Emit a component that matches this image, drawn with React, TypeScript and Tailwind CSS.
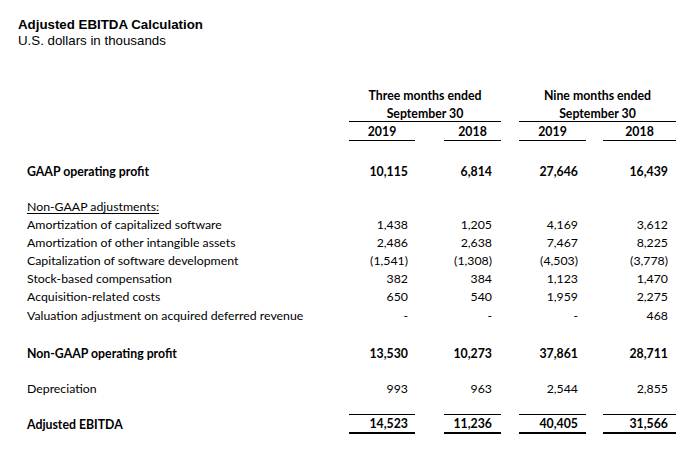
import React from 'react';

type Row = {
  label: string;
  values: [string, string, string, string];
  bold?: boolean;
  height: string;
};

const head = "font-['Liberation_Sans',Arial,sans-serif]";
const body = "font-['Lato','Open_Sans',sans-serif]";

const NumCells: React.FC<{ values: string[]; bold?: boolean }> = ({ values, bold }) => (
  <>
    <div className={`w-[66px] pr-[7px] text-right ${bold ? 'font-bold' : ''}`}>{values[0]}</div>
    <div className={`ml-[29px] w-[57px] pr-[9px] text-right ${bold ? 'font-bold' : ''}`}>{values[1]}</div>
    <div className={`ml-[18px] w-[67px] pr-[8px] text-right ${bold ? 'font-bold' : ''}`}>{values[2]}</div>
    <div className={`ml-[17px] w-[73px] pr-[8px] text-right ${bold ? 'font-bold' : ''}`}>{values[3]}</div>
  </>
);

const adjustments: Row[] = [
  { label: 'Amortization of capitalized software', values: ['1,438', '1,205', '4,169', '3,612'], height: 'h-[18px]' },
  { label: 'Amortization of other intangible assets', values: ['2,486', '2,638', '7,467', '8,225'], height: 'h-[18px]' },
  { label: 'Capitalization of software development', values: ['(1,541)', '(1,308)', '(4,503)', '(3,778)'], height: 'h-[18px]' },
  { label: 'Stock-based compensation', values: ['382', '384', '1,123', '1,470'], height: 'h-[18px]' },
  { label: 'Acquisition-related costs', values: ['650', '540', '1,959', '2,275'], height: 'h-[19px]' },
  { label: 'Valuation adjustment on acquired deferred revenue', values: ['-', '-', '-', '468'], height: 'h-[19px]' },
];

export default function App() {
  return (
    <div className="w-[700px] h-[457px] bg-white text-black overflow-hidden">
      {/* Title */}
      <div className={`${head} pl-[18px] pt-[17px] text-[13.3px] leading-[16px]`}>
        <div className="font-bold">Adjusted EBITDA Calculation</div>
        <div>U.S. dollars in thousands</div>
      </div>

      <div className={`${body} text-[12.3px] pl-[27px] mt-[38px]`}>
        {/* Column headers */}
        <div className="flex">
          <div className="w-[322px]" />
          <div className="w-[152px] border-b border-black text-center font-bold">
            <div className="h-[18px] leading-[18px]">Three months ended</div>
            <div className="h-[16px] leading-[18px]">September 30</div>
          </div>
          <div className="ml-[18px] w-[157px] border-b border-black text-center font-bold">
            <div className="h-[18px] leading-[18px]">Nine months ended</div>
            <div className="h-[16px] leading-[18px]">September 30</div>
          </div>
        </div>
        <div className="flex h-[19px] leading-[20px] font-bold">
          <div className="w-[322px]" />
          <div className="w-[66px] border-b border-black text-center">2019</div>
          <div className="ml-[29px] w-[57px] border-b border-black text-center">2018</div>
          <div className="ml-[18px] w-[67px] border-b border-black text-center">2019</div>
          <div className="ml-[17px] w-[73px] border-b border-black text-center">2018</div>
        </div>

        {/* GAAP */}
        <div className="flex h-[18px] leading-[18px] mt-[22px]">
          <div className="w-[322px] font-bold">GAAP operating profit</div>
          <NumCells values={['10,115', '6,814', '27,646', '16,439']} bold />
        </div>

        {/* Adjustments */}
        <div className="h-[18px] leading-[18px] mt-[17px]">
          <span className="underline underline-offset-2">Non-GAAP adjustments:</span>
        </div>
        {adjustments.map((r) => (
          <div key={r.label} className={`flex ${r.height} leading-[18px]`}>
            <div className="w-[322px]">{r.label}</div>
            <NumCells values={r.values} />
          </div>
        ))}

        {/* Non-GAAP */}
        <div className="flex h-[18px] leading-[18px] mt-[19px]">
          <div className="w-[322px] font-bold">Non-GAAP operating profit</div>
          <NumCells values={['13,530', '10,273', '37,861', '28,711']} bold />
        </div>

        <div className="flex h-[18px] leading-[18px] mt-[17px]">
          <div className="w-[322px]">Depreciation</div>
          <NumCells values={['993', '963', '2,544', '2,855']} />
        </div>

        {/* Adjusted EBITDA */}
        <div className="flex mt-[16px] font-bold">
          <div className="w-[322px] h-[20px] leading-[20px] pt-[1px]">Adjusted EBITDA</div>
          <div className="w-[66px] h-[20px] leading-[18px] border-t border-b-2 border-black pr-[7px] text-right">14,523</div>
          <div className="ml-[29px] w-[57px] h-[20px] leading-[18px] border-t border-b-2 border-black pr-[9px] text-right">11,236</div>
          <div className="ml-[18px] w-[67px] h-[20px] leading-[18px] border-t border-b-2 border-black pr-[8px] text-right">40,405</div>
          <div className="ml-[17px] w-[73px] h-[20px] leading-[18px] border-t border-b-2 border-black pr-[8px] text-right">31,566</div>
        </div>
      </div>
    </div>
  );
}
